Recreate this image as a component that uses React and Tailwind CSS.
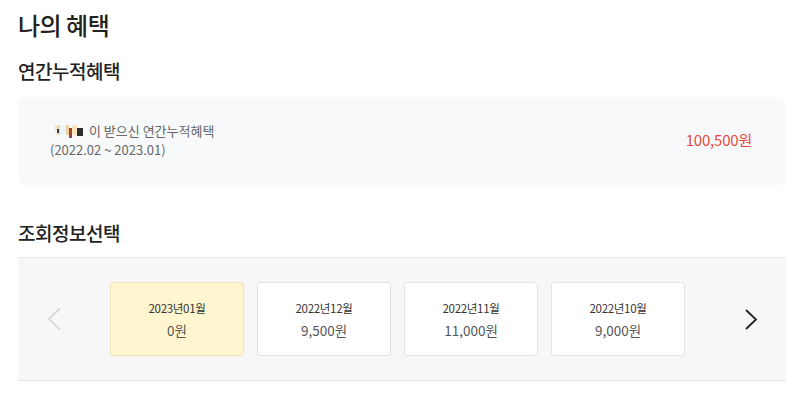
const months = [
  { label: "2023년01월", amount: "0원", active: true },
  { label: "2022년12월", amount: "9,500원" },
  { label: "2022년11월", amount: "11,000원" },
  { label: "2022년10월", amount: "9,000원" },
]

// blurred (masked) user name
const MaskedName = () => (
  <span className="inline-flex items-start h-[11px] w-[33px] mr-[1px]">
    <span className="w-[2px] h-[4px] bg-[#f7dfb8] mt-[1px]" />
    <span className="w-[3px] h-[10px] bg-[#f5d8ad] flex items-center">
      <span className="w-[2px] h-[4px] bg-[#3a3a3a] mt-[1px]" />
    </span>
    <span className="w-[6px] h-[10px] bg-[#eaf5f9]" />
    <span className="w-[3px] h-[10px] bg-[#f0cfa4]" />
    <span className="w-[3px] h-[10px] bg-[#9b4a2c] mt-[3px]" />
    <span className="w-[5px] h-[10px] bg-[#f8e6bf]" />
    <span className="w-[6px] h-[8px] bg-[#2e2e2e] mt-[3px]" />
  </span>
)

const App = () => {
  return (
    <div
      className="w-[800px] h-[398px] bg-white pl-[18px] pr-[14px] overflow-hidden text-[#222]"
      style={{ fontFamily: '"Noto Sans CJK KR", "Noto Sans", sans-serif' }}
    >
      <h1 className="pt-[9px] text-[24px] leading-8 font-medium tracking-[-0.5px]">나의 혜택</h1>

      <h2 className="mt-[16px] text-[19px] leading-7 font-medium tracking-[-0.5px]">연간누적혜택</h2>

      <div className="mt-3 h-[88px] rounded-lg bg-[#f8f9fb] flex items-center justify-between pl-[32px] pr-[34px]">
        <div className="text-[13px] text-[#666] -mt-[2px]">
          <p className="pl-[5px] h-[19px] leading-[19px] flex items-center">
            <MaskedName />
            <span>이 받으신 연간누적혜택</span>
          </p>
          <p className="h-[19px] leading-[19px]">(2022.02 ~ 2023.01)</p>
        </div>
        <div className="text-[15px] text-[#e64b3c] tracking-[-0.2px] -mt-[2px]">100,500원</div>
      </div>

      <h2 className="mt-[34px] text-[19px] leading-7 font-medium tracking-[-0.5px]">조회정보선택</h2>

      <div className="mt-[10px] h-[124px] bg-[#f7f7f7] border-t border-b border-[#e6e6e6] flex items-center">
        <button className="ml-[29px] w-[14px] h-[24px] flex items-center justify-center">
          <svg width="14" height="24" viewBox="0 0 14 24" fill="none">
            <polyline points="13,1.5 2,12 13,22.5" stroke="#d0d0d0" strokeWidth="1.5" />
          </svg>
        </button>

        <div className="ml-[49px] flex gap-[13px]">
          {months.map((m) => (
            <div
              key={m.label}
              className={`w-[134px] h-[74px] rounded-[3px] border flex flex-col items-center justify-center ${
                m.active ? "bg-[#fff6cf] border-[#ede3bd]" : "bg-white border-[#e3e3e3]"
              }`}
            >
              <span className="text-[11.5px] leading-[18px] text-[#333] tracking-[-0.3px]">{m.label}</span>
              <span className="mt-[3px] text-[13.5px] leading-[20px] text-[#555]">{m.amount}</span>
            </div>
          ))}
        </div>

        <button className="ml-auto mr-[28px] w-[14px] h-[24px] flex items-center justify-center">
          <svg width="14" height="24" viewBox="0 0 14 24" fill="none">
            <polyline points="2,3 12,12.5 2,22" stroke="#222" strokeWidth="1.8" />
          </svg>
        </button>
      </div>
    </div>
  )
}

export default App
